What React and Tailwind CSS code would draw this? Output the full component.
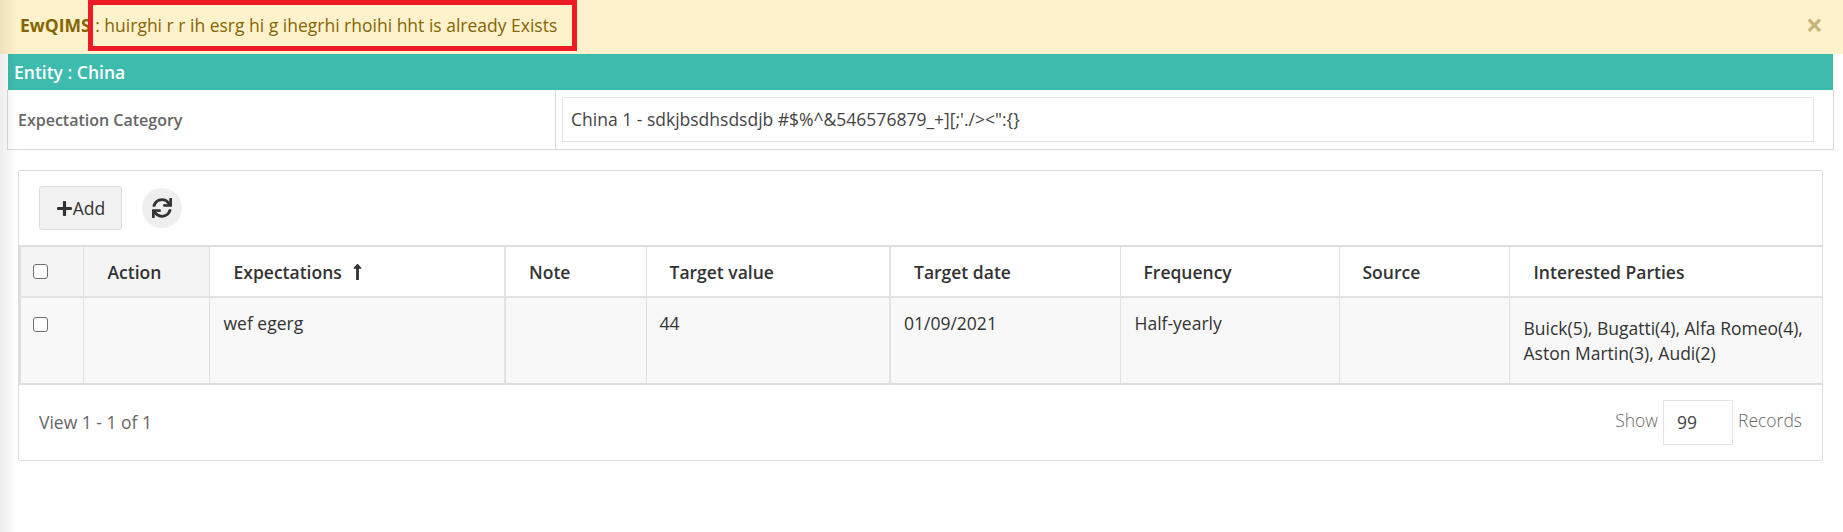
import { FaLongArrowAltUp, FaPlus, FaSync } from "react-icons/fa";

const headers = [
  { label: "Action", className: "bg-[#f4f4f4] pl-[24px]" },
  { label: "Expectations", sorted: true, className: "border-r-2 pl-[24px]" },
  { label: "Note", className: "pl-[23px]" },
  { label: "Target value", className: "border-r-2 pl-[23px]" },
  { label: "Target date", className: "pl-[23px]" },
  { label: "Frequency", className: "pl-[23px]" },
  { label: "Source", className: "pl-[23px]" },
  { label: "Interested Parties", className: "border-r-0 pl-[24px]" },
];

function Check() {
  return (
    <input
      type="checkbox"
      className="block h-[15px] w-[15px] appearance-none rounded-[3px] border-[1.5px] border-[#6f6f6f] bg-white"
    />
  );
}

export default function App() {
  return (
    <div className="relative h-[532px] w-[1843px] overflow-hidden bg-white font-['Open_Sans',sans-serif] text-[17.5px] text-[#333]">
      {/* sidebar shadow */}
      <div className="pointer-events-none absolute inset-y-0 left-0 z-10 w-[18px] bg-gradient-to-r from-[#00000012] to-transparent" />

      <div className="flex h-[54px] items-center justify-between bg-[#fef2cc] pl-[20px] pr-[20px] text-[#856404]">
        <p className="-mt-[3px] whitespace-nowrap">
          <span className="font-bold">EwQIMS</span>
          <span className="relative">
            {" "}: huirghi r r ih esrg hi g ihegrhi rhoihi hht is already Exists
            <span className="absolute -bottom-[14px] -left-[3px] -right-[20px] -top-[13px] border-[5px] border-[#ed1c24]" />
          </span>
        </p>
        <span className="-mt-[5px] text-[30px] font-bold leading-none text-[#c7b57c]">×</span>
      </div>

      <div className="ml-[8px] w-[1825px] bg-[#3dbbac] pl-[6px] font-semibold leading-[36px] text-white">
        Entity : China
      </div>

      <div className="ml-[7px] flex h-[60px] w-[1827px] border-x border-b border-[#d9d9d9]">
        <div className="flex w-[548px] items-center border-r border-[#d9d9d9] pl-[10px] text-[16px] font-semibold text-[#666]">
          Expectation Category
        </div>
        <div className="flex-1 pl-[6px] pr-[19px] pt-[7px]">
          <div className="flex h-[45px] items-center border border-[#e3e3e3] pl-[8px] text-[#444]">
            China 1 - sdkjbsdhsdsdjb #$%^&amp;546576879_+][;'./&gt;&lt;":{"{}"}
          </div>
        </div>
      </div>

      <div className="ml-[18px] mt-[20px] h-[291px] w-[1805px] rounded-[2px] border border-[#dedede]">
        <div className="flex h-[74px] items-start gap-[20px] pl-[20px] pt-[15px]">
          <button
            type="button"
            className="flex h-[44px] w-[83px] items-center justify-center rounded-[3px] border border-[#dcdcdc] bg-[#f2f2f2] text-[#333]"
          >
            <FaPlus className="h-[17px] w-[17px]" />
            Add
          </button>
          <button
            type="button"
            className="mt-[2px] flex h-[40px] w-[40px] items-center justify-center rounded-full bg-[#efefef] text-[#333]"
          >
            <FaSync className="h-[20px] w-[20px]" />
          </button>
        </div>

        <table className="w-full table-fixed border-collapse border-y-[2px] border-l-[2px] border-[#dedede]">
          <colgroup>
            <col className="w-[63px]" />
            <col className="w-[126px]" />
            <col className="w-[296px]" />
            <col className="w-[141px]" />
            <col className="w-[244px]" />
            <col className="w-[230px]" />
            <col className="w-[219px]" />
            <col className="w-[170px]" />
            <col />
          </colgroup>
          <thead>
            <tr className="h-[51px] border-b-2 border-[#e2e2e2]">
              <th className="border-r border-[#e2e2e2] bg-[#f4f4f4] pl-[12px] text-left">
                <Check />
              </th>
              {headers.map((h) => (
                <th
                  key={h.label}
                  className={`border-r border-[#e2e2e2] pt-[1px] text-left text-[17.5px] font-semibold text-[#333] ${h.className}`}
                >
                  <span className="inline-flex items-center gap-[10px]">
                    {h.label}
                    {h.sorted && <FaLongArrowAltUp className="h-[18px] w-[11px] text-[#333]" />}
                  </span>
                </th>
              ))}
            </tr>
          </thead>
          <tbody>
            <tr className="h-[87px] bg-[#f8f8f8] align-top leading-[25px] text-[#333]">
              <td className="border-r border-[#e2e2e2] pl-[12px] pt-[19px]">
                <Check />
              </td>
              <td className="border-r border-[#e2e2e2]" />
              <td className="border-r-2 border-[#e2e2e2] pl-[14px] pt-[13px]">wef egerg</td>
              <td className="border-r border-[#e2e2e2]" />
              <td className="border-r-2 border-[#e2e2e2] pl-[13px] pt-[13px]">44</td>
              <td className="border-r border-[#e2e2e2] pl-[13px] pt-[13px]">01/09/2021</td>
              <td className="border-r border-[#e2e2e2] pl-[14px] pt-[13px]">Half-yearly</td>
              <td className="border-r border-[#e2e2e2]" />
              <td className="pl-[14px] pt-[18px]">
                Buick(5), Bugatti(4), Alfa Romeo(4), Aston Martin(3), Audi(2)
              </td>
            </tr>
          </tbody>
        </table>

        <div className="flex h-[74px] items-center justify-between pl-[20px] pr-[20px]">
          <span className="text-[#666]">View 1 - 1 of 1</span>
          <div className="flex items-center gap-[4px] font-light text-[#666]">
            <span className="-mt-[4px]">Show</span>
            <div className="mx-[1px] flex h-[45px] w-[70px] items-center border border-[#e3e3e3] pl-[13px] font-normal text-[#444]">
              99
            </div>
            <span className="-mt-[4px]">Records</span>
          </div>
        </div>
      </div>
    </div>
  );
}
